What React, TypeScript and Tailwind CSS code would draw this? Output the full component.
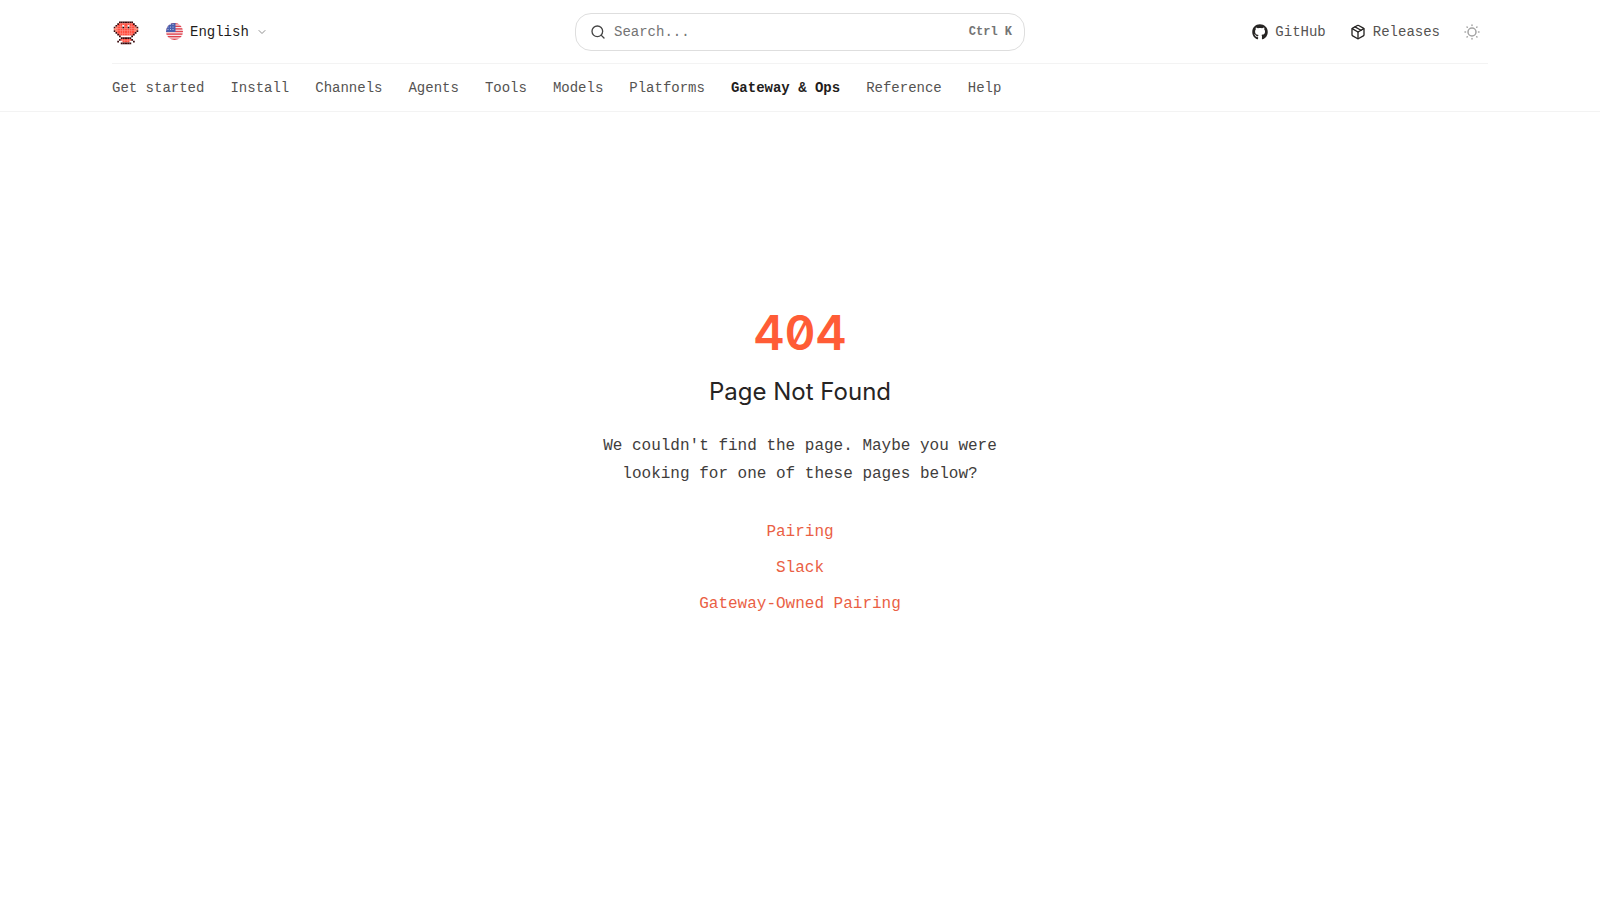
import { FaGithub } from 'react-icons/fa';
import { ChevronDown, Package, Search } from 'lucide-react';

const tabs = [
  'Get started',
  'Install',
  'Channels',
  'Agents',
  'Tools',
  'Models',
  'Platforms',
  'Gateway & Ops',
  'Reference',
  'Help'
];

const suggestions = ['Pairing', 'Slack', 'Gateway-Owned Pairing'];

// k = outline, r = shell, l = claws, e = eye, w = eye glint
const logoRows = [
  '................',
  '................',
  '....kkkkkkkk....',
  '...krrrrrrrrk...',
  '..krrrwrrwrrrk..',
  '.klrrrerrerrrlk.',
  '.llrrrrrrrrrrll.',
  '.klrrrrrrrrrrlk.',
  '..krrrrrrrrrrk..',
  '...krrrrrrrrk...',
  '....k......k....',
  '.....kkkkkk.....',
  '....krrrrrrk....',
  '...k..rrrr..k...',
  '.....kkkkkk.....',
  '................'
];

const logoColors: Record<string, string> = {
  k: '#3a0a0d',
  r: '#ff4f40',
  l: '#ff775f',
  e: '#081016',
  w: '#f5fbff'
};

function Logo() {
  return (
    <svg
      width="28"
      height="28"
      viewBox="0 0 16 16"
      shapeRendering="geometricPrecision"
      aria-hidden="true">
      {logoRows.map((row, y) =>
        row
          .split('')
          .map((c, x) =>
            logoColors[c] ? (
              <rect key={`${x}-${y}`} x={x} y={y} width="1" height="1" fill={logoColors[c]} />
            ) : null
          )
      )}
    </svg>
  );
}

function Flag() {
  return (
    <svg width="17" height="17" viewBox="0 0 17 17" aria-hidden="true">
      <clipPath id="flag-circle">
        <circle cx="8.5" cy="8.5" r="8.5" />
      </clipPath>
      <g clipPath="url(#flag-circle)">
        <rect width="17" height="17" fill="#f7e9ec" />
        {[0, 2.6, 5.2, 7.8, 10.4, 13, 15.6].map((y) => (
          <rect key={y} y={y} width="17" height="1.4" fill="#e0424f" />
        ))}
        <rect width="9.5" height="9" fill="#4a5fae" />
        {[1.5, 4, 6.5].map((y) =>
          [2, 4.5, 7].map((x) => (
            <circle key={`${x}-${y}`} cx={x} cy={y} r="0.5" fill="#dfe4f5" />
          ))
        )}
      </g>
    </svg>
  );
}

function Sun() {
  return (
    <svg
      width="16"
      height="16"
      viewBox="0 0 16 16"
      fill="none"
      stroke="currentColor"
      strokeWidth="1.5"
      strokeLinecap="round"
      aria-hidden="true">
      <circle cx="8" cy="8" r="4" />
      <path d="M8 1v.5M8 14.5v.5M1 8h.5M14.5 8h.5M3 3l.3.3M12.7 12.7l.3.3M3 13l.3-.3M12.7 3.3l.3-.3" />
    </svg>
  );
}

export default function App() {
  return (
    <div className="min-h-screen bg-white font-['Liberation_Mono',monospace] text-[#3f3d3c]">
      {/* Header */}
      <header className="border-b border-[#f3f3f3]">
        <div className="max-w-[1472px] mx-auto px-12">
          <div className="h-16 flex items-center border-b border-[#f3f3f3] text-sm">
            <div className="flex-1 flex items-center gap-[26px]">
              <a href="#" aria-label="Home">
                <Logo />
              </a>
              <button type="button" className="flex items-center gap-[7px] text-[#1f1d1c]">
                <Flag />
                English
                <ChevronDown className="size-3 text-[#8f8f8f]" />
              </button>
            </div>

            <button
              type="button"
              className="w-[450px] h-[38px] flex items-center gap-2 px-3.5 pr-3 rounded-2xl border border-[#dedede] text-[#747474]">
              <Search className="size-4 text-[#444]" />
              Search...
              <kbd className="ml-auto font-['Liberation_Mono',monospace] text-xs font-bold">
                Ctrl K
              </kbd>
            </button>

            <div className="flex-1 flex items-center justify-end gap-6 text-[#555352]">
              <a href="#" className="flex items-center gap-[7px]">
                <FaGithub className="size-4 text-[#262423]" />
                GitHub
              </a>
              <a href="#" className="flex items-center gap-[7px]">
                <Package className="size-4 text-[#262423]" />
                Releases
              </a>
              <button type="button" aria-label="Toggle theme" className="pr-2 text-[#a3a3a3]">
                <Sun />
              </button>
            </div>
          </div>

          <nav className="h-[47px] flex items-center gap-[26px] text-sm text-[#555352]">
            {tabs.map((tab) => (
              <a
                key={tab}
                href="#"
                className={tab === 'Gateway & Ops' ? 'font-bold text-[#1f1d1c]' : ''}>
                {tab}
              </a>
            ))}
          </nav>
        </div>
      </header>

      {/* Not found */}
      <main className="flex flex-col items-center px-4 pt-[197px] pb-16 text-center">
        <h1 className="font-['Inter',sans-serif] text-5xl leading-none font-semibold text-[#ff5c36] [font-feature-settings:'zero','tnum']">
          404
        </h1>
        <h2 className="mt-[19px] font-['Inter',sans-serif] text-2xl text-[#262423]">
          Page Not Found
        </h2>
        <p className="mt-6 max-w-md leading-7">
          We couldn't find the page. Maybe you were looking for one of these pages below?
        </p>
        <ul className="mt-8 flex flex-col gap-3 text-[#ea5f45]">
          {suggestions.map((page) => (
            <li key={page}>
              <a href="#">{page}</a>
            </li>
          ))}
        </ul>
      </main>
    </div>
  );
}
